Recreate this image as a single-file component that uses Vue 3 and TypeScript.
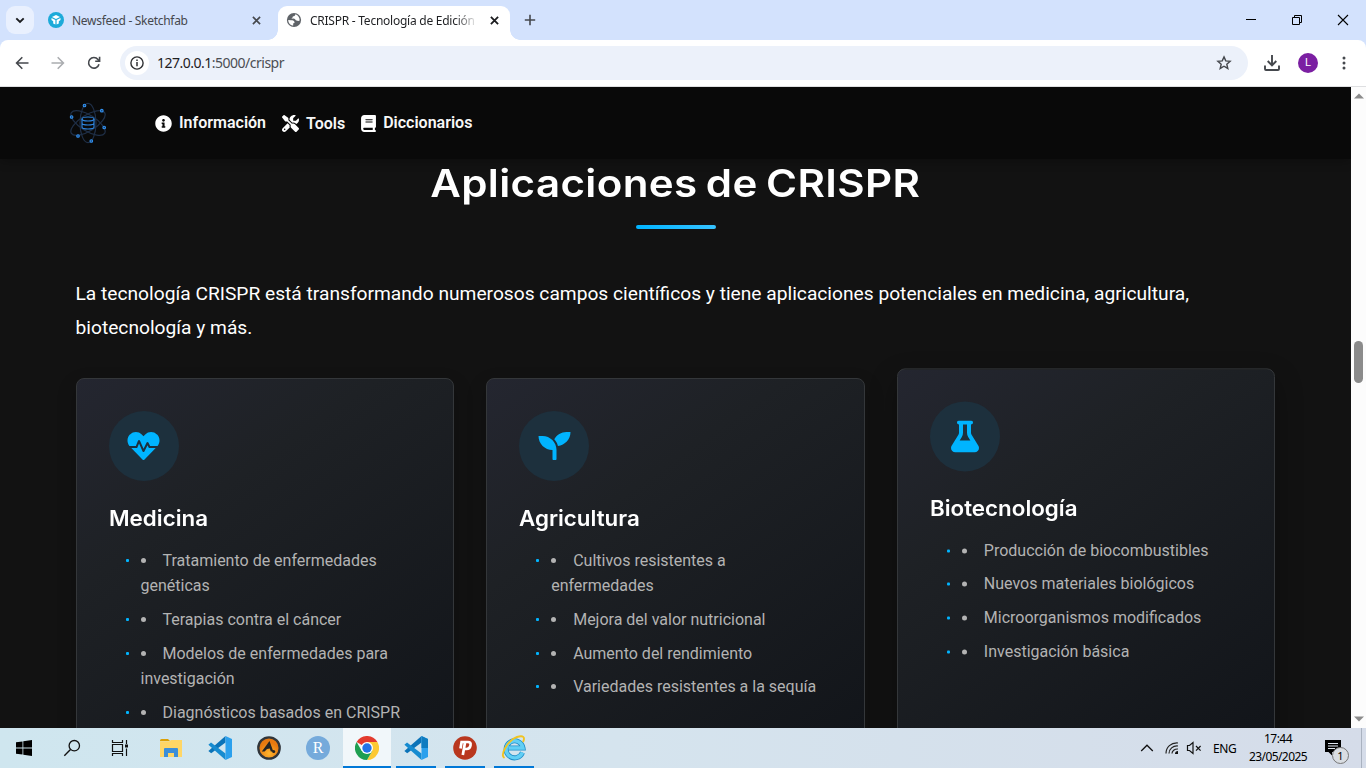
<script setup lang="ts">
interface NavLink { label: string; viewBox: string; width: number; path: string; shift?: boolean }
interface Application { title: string; raised: boolean; viewBox: string; iconWidth: number; path: string; items: string[] }

const links: NavLink[] = [
  { label: 'Información', viewBox: '0 0 512 512', width: 17, path: 'M256 8C119.043 8 8 119.083 8 256c0 136.997 111.043 248 248 248s248-111.003 248-248C504 119.083 392.957 8 256 8zm0 110c23.196 0 42 18.804 42 42s-18.804 42-42 42-42-18.804-42-42 18.804-42 42-42zm56 254c0 6.627-5.373 12-12 12h-88c-6.627 0-12-5.373-12-12v-24c0-6.627 5.373-12 12-12h12v-64h-12c-6.627 0-12-5.373-12-12v-24c0-6.627 5.373-12 12-12h64c6.627 0 12 5.373 12 12v100h12c6.627 0 12 5.373 12 12v24z' },
  { label: 'Tools', viewBox: '0 0 512 512', width: 17, shift: true, path: 'M78.6 5C69.1-2.4 55.6-1.5 47 7L7 47c-8.5 8.5-9.4 22-2.1 31.6l80 104c4.5 5.9 11.6 9.4 19 9.4h54.1l109 109c-14.7 29-10 65.4 14.3 89.600l112 112c12.5 12.5 32.8 12.5 45.3 0l64-64c12.5-12.5 12.5-32.8 0-45.300l-112-112c-24.200-24.200-60.600-29-89.600-14.300l-109-109V104c0-7.500-3.500-14.500-9.400-19L78.600 5zM19.900 396.100C7.200 408.800 0 426.100 0 444.100C0 481.600 30.400 512 67.900 512c18 0 35.300-7.200 48-19.900L233.700 374.300c-7.800-20.900-9-43.600-3.600-65.100l-61.700-61.700L19.900 396.100zM512 144c0-10.500-1.100-20.700-3.200-30.500c-2.400-11.200-16.100-14.100-24.200-6l-63.900 63.900c-3 3-7.100 4.700-11.300 4.700H352c-8.800 0-16-7.200-16-16V102.600c0-4.200 1.700-8.300 4.700-11.300l63.900-63.900c8.100-8.100 5.200-21.800-6-24.200C388.700 1.100 378.500 0 368 0C288.500 0 224 64.500 224 144l0 .8 85.300 85.300c36-9.100 75.800 .5 104 28.700L429 274.500c49-23 83-72.800 83-130.500zM56 432a24 24 0 1 1 48 0 24 24 0 1 1 -48 0z' },
  { label: 'Diccionarios', viewBox: '0 0 448 512', width: 15, path: 'M96 0C43 0 0 43 0 96V416c0 53 43 96 96 96H384h32c17.7 0 32-14.3 32-32s-14.3-32-32-32V384c17.7 0 32-14.3 32-32V32c0-17.7-14.3-32-32-32H384 96zm0 384H352v64H96c-17.700 0-32-14.300-32-32s14.300-32 32-32zm32-240c0-8.800 7.200-16 16-16H336c8.800 0 16 7.200 16 16s-7.200 16-16 16H144c-8.800 0-16-7.200-16-16zm16 48H336c8.800 0 16 7.200 16 16s-7.200 16-16 16H144c-8.800 0-16-7.200-16-16s7.200-16 16-16z' },
]

const applications: Application[] = [
  {
    title: 'Medicina', raised: false, viewBox: '0 0 512 512', iconWidth: 33,
    path: 'M320.2 243.8l-49.7 99.4c-6 12.1-23.4 11.7-28.9-.6l-56.9-126.3-30 71.7H60.6l182.5 186.5c7.1 7.3 18.6 7.3 25.7 0L451.4 288H342.3l-22.1-44.2zM473.7 73.9l-2.4-2.5c-51.5-52.6-135.8-52.6-187.4 0L256 100l-27.9-28.5c-51.5-52.7-135.9-52.7-187.4 0l-2.4 2.4C-10.4 123.7-12.5 203 31 256h102.4l35.9-86.2c5.4-12.9 23.6-13.1 29.3-.4l58.2 129.3 49-97.9c5.9-11.8 22.7-11.8 28.6 0l27.6 55.2H481c43.5-53 41.4-132.3-7.3-182.1z',
    items: ['Tratamiento de enfermedades genéticas', 'Terapias contra el cáncer', 'Modelos de enfermedades para investigación', 'Diagnósticos basados en CRISPR'],
  },
  {
    title: 'Agricultura', raised: false, viewBox: '0 0 512 512', iconWidth: 33,
    path: 'M64 96H0c0 123.7 100.3 224 224 224v144c0 8.8 7.2 16 16 16h32c8.8 0 16-7.2 16-16V320C288 196.3 187.7 96 64 96zm384-64c-84.2 0-157.4 46.5-195.7 115.2 27.7 30.2 48.2 66.9 59 107.6C424 243.1 512 147.9 512 32h-64z',
    items: ['Cultivos resistentes a enfermedades', 'Mejora del valor nutricional', 'Aumento del rendimiento', 'Variedades resistentes a la sequía'],
  },
  {
    title: 'Biotecnología', raised: true, viewBox: '0 0 448 512', iconWidth: 28,
    path: 'M288 0H160 128C110.3 0 96 14.3 96 32s14.3 32 32 32V196.8c0 11.8-3.3 23.5-9.500 33.500L10.300 406.200C3.600 417.200 0 429.700 0 442.600C0 480.900 31.100 512 69.400 512H378.600c38.300 0 69.400-31.100 69.400-69.400c0-12.800-3.600-25.400-10.300-36.400L329.500 230.400c-6.200-10.100-9.500-21.700-9.500-33.500V64c17.700 0 32-14.300 32-32s-14.300-32-32-32H288zM192 196.800V64h64V196.800c0 23.700 6.600 46.900 19 67.100L309.500 320h-171L173 263.900c12.400-20.200 19-43.400 19-67.100z',
    items: ['Producción de biocombustibles', 'Nuevos materiales biológicos', 'Microorganismos modificados', 'Investigación básica'],
  },
]
</script>

<template>
  <div class="screen">
    <header class="tabstrip">
      <div class="tab-search">
        <svg width="10" height="7" viewBox="0 0 10 7"><path d="M1.3 1.3 5 5l3.7-3.7" fill="none" stroke="#1b1c1f" stroke-width="1.9" /></svg>
      </div>
      <div class="tab idle">
        <svg class="favicon" width="16" height="16" viewBox="0 0 16 16">
          <circle cx="8" cy="8" r="8" fill="#1caad9" />
          <path d="M8 3.1 12 5 8 7 4 5z M3.5 6.1 7.4 8v4.6L5.2 11.6V9.2L3.5 8.1z M12.5 6.1 8.6 8v4.6l2.2-1V9.2l1.7-1.1z" fill="#fff" />
        </svg>
        <span class="tab-title newsfeed">Newsfeed - Sketchfab</span>
        <svg class="close" width="9" height="9" viewBox="0 0 9 9"><path d="M.9.9l7.2 7.2M8.1.9.9 8.1" stroke="#45484d" stroke-width="1.6" /></svg>
      </div>
      <div class="tab active">
        <svg class="favicon" width="16" height="16" viewBox="0 0 16 16">
          <circle cx="8" cy="8" r="7.1" fill="#5f6368" />
          <path d="M2.200 8 5 8.200c1.600.1 2.900.3 3.400 1.500.5 1.100-.3 1.400-1.200 1.600v2.300C4.200 13.400 2.300 11 2.200 8zM9.300 2.300c-.1 1.700-1.200 2.100-2.500 2.200.1 1.200-.7 1.600-1.500 1.800.6.8 3.200-.2 4 1.300.5 1.200 1.700 1.300 3 1.400l1.400-.6C13.600 5.300 12 3 9.300 2.300z" fill="#fff" />
        </svg>
        <span class="tab-title crispr">CRISPR - Tecnología de Edición</span>
        <svg class="close" width="9" height="9" viewBox="0 0 9 9"><path d="M.9.9l7.2 7.2M8.1.9.9 8.1" stroke="#1b1c1f" stroke-width="1.8" /></svg>
      </div>
      <svg class="new-tab" width="12" height="12" viewBox="0 0 12 12"><path d="M6 .8v10.400M.8 6h10.400" stroke="#45484d" stroke-width="1.6" /></svg>
      <div class="window-buttons">
        <svg width="12" height="12" viewBox="0 0 12 12"><path d="M1 5.500h10" stroke="#000" /></svg>
        <svg width="12" height="12" viewBox="0 0 12 12"><path d="M1.500 3.500h7v7h-7zM3.500 3.500v-2h7v7h-2" fill="none" stroke="#000" /></svg>
        <svg width="12" height="12" viewBox="0 0 12 12"><path d="M1 1l10 10M11 1 1 11" stroke="#000" stroke-width="1.100" /></svg>
      </div>
    </header>

    <div class="toolbar">
      <svg class="back" width="14" height="14" viewBox="0 0 14 14"><path d="M13.500 7H2M7.300 1.300 1.600 7l5.700 5.700" fill="none" stroke="#45484d" stroke-width="1.600" /></svg>
      <svg class="forward" width="14" height="14" viewBox="0 0 14 14"><path d="M.5 7H12M6.700 1.300 12.400 7l-5.700 5.700" fill="none" stroke="#abadb0" stroke-width="1.600" /></svg>
      <svg class="reload" width="14" height="14" viewBox="0 0 14 14"><path d="M12 8.200A5.300 5.300 0 1 1 11 3.500L12.400 5M12.600.8v4.500H8.200" fill="none" stroke="#45484d" stroke-width="1.600" /></svg>
      <div class="omnibox">
        <span class="site-info">
          <svg width="14" height="14" viewBox="0 0 14 14"><circle cx="7" cy="7" r="6.100" fill="none" stroke="#303134" stroke-width="1.400" /><path d="M7 6.100v4.200M7 3.500v1.500" stroke="#303134" stroke-width="1.500" /></svg>
        </span>
        <span class="url"><b>127.0.0.1</b>:5000/crispr</span>
        <svg class="star" width="16" height="16" viewBox="0 0 16 16"><path d="M8 1.900l1.750 4 4.350.4-3.300 2.900 1 4.250L8 11.200l-3.800 2.250 1-4.250-3.300-2.900 4.350-.4z" fill="none" stroke="#45484d" stroke-width="1.400" /></svg>
      </div>
      <svg class="download" width="16" height="16" viewBox="0 0 16 16"><path d="M8 0v10M3.700 6l4.300 4.300L12.300 6M1 10.500V14q0 1 1 1h12q1 0 1-1v-3.500" fill="none" stroke="#45484d" stroke-width="1.900" /></svg>
      <span class="avatar">L</span>
      <svg class="kebab" width="4" height="14" viewBox="0 0 4 14"><g fill="#45484d"><circle cx="2" cy="2" r="1.500" /><circle cx="2" cy="7" r="1.500" /><circle cx="2" cy="12" r="1.500" /></g></svg>
    </div>

    <div class="viewport">
      <main class="page">
        <nav class="navbar">
          <svg class="logo" width="38" height="42" viewBox="0 0 38 42">
            <g fill="none" stroke="#1f2f47" stroke-width="1.200">
              <ellipse cx="19" cy="21" rx="8" ry="19.600" />
              <ellipse cx="19" cy="21" rx="8" ry="19.600" transform="rotate(58 19 21)" />
              <ellipse cx="19" cy="21" rx="8" ry="19.600" transform="rotate(-58 19 21)" />
            </g>
            <g fill="none" stroke="#2f86e0" stroke-width="1.150">
              <ellipse cx="19" cy="17" rx="6" ry="2" />
              <path d="M13 17v8c0 2.700 12 2.700 12 0v-8M13 21c0 2.700 12 2.700 12 0" />
            </g>
            <g fill="#173c66" stroke="#3291f0" stroke-width="1.100">
              <circle cx="15.500" cy="3.500" r="1.300" /><circle cx="32.800" cy="8.700" r="1.300" /><circle cx="2.600" cy="15" r="1.300" />
              <circle cx="35.200" cy="25.500" r="1.300" /><circle cx="9" cy="34" r="1.300" /><circle cx="22.300" cy="39" r="1.300" />
            </g>
          </svg>
          <a v-for="link in links" :key="link.label" class="nav-link" :class="{ shift: link.shift }">
            <svg :width="link.width" height="17" :viewBox="link.viewBox"><path :d="link.path" fill="#fff" /></svg>
            <span>{{ link.label }}</span>
          </a>
        </nav>

        <section class="content">
          <h2><span>Aplicaciones de CRISPR</span></h2>
          <div class="rule"></div>
          <p class="lead">La tecnología CRISPR está transformando numerosos campos científicos y tiene aplicaciones potenciales en medicina, agricultura, biotecnología y más.</p>
          <div class="cards">
            <article v-for="app in applications" :key="app.title" class="card" :class="{ raised: app.raised }">
              <div class="card-icon">
                <svg :width="app.iconWidth" height="32" :viewBox="app.viewBox"><path :d="app.path" fill="#00b4ff" /></svg>
              </div>
              <h3>{{ app.title }}</h3>
              <ul>
                <li v-for="item in app.items" :key="item"><i class="tick"></i><i class="dot"></i>{{ item }}</li>
              </ul>
            </article>
          </div>
        </section>
      </main>
      <div class="scrollbar">
        <svg width="10" height="6" viewBox="0 0 10 6"><path d="M0 5.500 5 .5l5 5z" fill="#8b8b8b" /></svg>
        <div class="thumb"></div>
        <svg width="10" height="6" viewBox="0 0 10 6"><path d="M0 .5l5 5 5-5z" fill="#8b8b8b" /></svg>
      </div>
    </div>

    <footer class="taskbar">
      <div class="system-buttons">
        <div class="task"><svg width="16" height="16" viewBox="0 0 16 16"><path d="M0 2.300 6.500 1.400v6.200H0zM7.300 1.200 16 0v7.600H7.300zM0 8.400h6.500v6.200L0 13.700zM7.300 8.400H16V16l-8.700-1.200z" fill="#000" /></svg></div>
        <div class="task"><svg width="18" height="18" viewBox="0 0 18 18"><circle cx="11.300" cy="6.700" r="5.200" fill="none" stroke="#111" stroke-width="1.300" /><path d="M7.500 10.500 1.300 16.700" stroke="#111" stroke-width="1.400" /></svg></div>
        <div class="task"><svg width="18" height="16" viewBox="0 0 18 16"><path d="M1.500 4.500h10v7h-10zM1.500 0v2.500h10V0M1.500 16v-2.500h10V16M15.500 0v4M15.500 8.500V16" fill="none" stroke="#111" stroke-width="1.200" /><path d="M14 4.500h3v3h-3z" fill="#111" /></svg></div>
      </div>
      <div class="apps">
        <div class="task">
          <svg width="22" height="20" viewBox="0 0 22 20"><path d="M0 2.500Q0 1 1.500 1H8l2 2H0z" fill="#dca006" /><path d="M0 3.200h9.500L11 2h11v17H0z" fill="#ffd666" /><path d="M4 19v-8q0-1 1-1h12q1 0 1 1v8h-4v-4H8v4z" fill="#3c8ed8" /></svg>
        </div>
        <div class="task">
          <svg width="24" height="24" viewBox="0 0 24 24"><path d="M17.500 0v6.500L3.200 17.300.4 15z" fill="#0b73b8" /><path d="M.4 8.800 3 6.600l14.500 11V24z" fill="#168bd0" /><path d="M17.500 0 24 3v18l-6.500 3z" fill="#2ba0ed" /></svg>
        </div>
        <div class="task">
          <svg width="24" height="24" viewBox="0 0 24 24"><defs><radialGradient id="flame" cy=".75"><stop offset="0" stop-color="#ffb52d" /><stop offset="1" stop-color="#e77910" /></radialGradient></defs><circle cx="12" cy="12" r="10.700" fill="url(#flame)" stroke="#30353a" stroke-width="2.300" /><path d="M4.800 15.500 12.500 5l3.800 10.500h-2.500l-1-3-2.800.5-2.400 2.500z" fill="#242424" /><circle cx="16.700" cy="15.500" r="1.500" fill="#222" /></svg>
        </div>
        <div class="task"><span class="r-logo">R</span></div>
        <div class="task current">
          <svg width="24" height="24" viewBox="0 0 24 24"><path d="M12 12 1.600 6A12 12 0 0 1 22.400 6z" fill="#e33b2e" /><path d="M12 6h10.400A12 12 0 0 1 12 24l5.200-9z" fill="#fcc934" /><path d="M1.600 6A12 12 0 0 0 12 24l5.200-9L12 12 6.800 15z" fill="#1e9f51" /><circle cx="12" cy="12" r="6" fill="#fff" /><circle cx="12" cy="12" r="4.700" fill="#2374e8" /></svg>
        </div>
        <div class="task open">
          <svg width="24" height="24" viewBox="0 0 24 24"><path d="M17.500 0v6.500L3.200 17.300.4 15z" fill="#0b73b8" /><path d="M.4 8.800 3 6.600l14.500 11V24z" fill="#168bd0" /><path d="M17.500 0 24 3v18l-6.500 3z" fill="#2ba0ed" /><path d="M17.500 0 24 3v9h-6.500z" fill="#0f7cc0" /></svg>
        </div>
        <div class="task open">
          <svg width="24" height="24" viewBox="0 0 24 24"><circle cx="12" cy="12" r="11.800" fill="#b9371e" /><path d="M7.500 12.500 8.600 6h6.400q3.200 0 2.500 3.500t-4 3.500h-2.300M12 6.500 9.800 19" fill="none" stroke="#fff" stroke-width="2.700" /></svg>
        </div>
        <div class="task open">
          <svg width="26" height="26" viewBox="0 0 26 26"><path d="M21.500 17.500A8.500 8.500 0 1 1 22 13H7.500" fill="none" stroke="#218dc7" stroke-width="5" /><path d="M21.500 17.500A8.500 8.500 0 1 1 22 13H7.500" fill="none" stroke="#62cff5" stroke-width="3.400" /><path d="M3.500 23C-1.500 20 7 5 16 2c6-2 8.500 0 6 5" fill="none" stroke="#f1c421" stroke-width="1.900" /></svg>
        </div>
      </div>
      <div class="tray">
        <svg class="chevron" width="14" height="8" viewBox="0 0 14 8"><path d="M1.200 7 7 1.200 12.800 7" fill="none" stroke="#111" stroke-width="1.300" /></svg>
        <svg class="wifi" width="14" height="14" viewBox="0 0 14 14"><path d="M1 12.500C1 6 6 1.500 13 2M4 12.500C4 8 8 4.500 13 5M7 12.500C7 10 9.500 7.800 13 8" fill="none" stroke="#222" stroke-width="1.200" /><path d="M10 13q0-3 3-3v3z" fill="#111" /></svg>
        <svg class="mute" width="16" height="14" viewBox="0 0 16 14"><path d="M1.500 4.500h2L7 1.500v11l-3.500-3h-2z" fill="none" stroke="#111" stroke-width="1.200" /><path d="M10 5l4.600 4.600M14.600 5 10 9.600" stroke="#111" stroke-width="1.200" /></svg>
        <span class="lang">ENG</span>
        <div class="clock"><span>17:44</span><span class="date">23/05/2025</span></div>
        <div class="notice">
          <svg width="16" height="16" viewBox="0 0 16 16"><path d="M0 0h16v12H7v3.500L3.500 12H0z" fill="#000" /><path d="M3 3.500h10M3 6h10M3 8.500h7" stroke="#dfe5ee" stroke-width="1" /></svg>
          <span class="badge">1</span>
        </div>
        <div class="peek"></div>
      </div>
    </footer>
  </div>
</template>

<style>
html, body { margin: 0; overflow: hidden; }
</style>

<style scoped>
* { box-sizing: border-box; }
svg { display: block; flex: none; }
.screen { width: 1366px; height: 768px; display: flex; flex-direction: column; overflow: hidden; font-family: 'Noto Sans', 'Open Sans', sans-serif; background: #d3e2fd; }

.tabstrip { height: 40px; flex: none; display: flex; align-items: center; padding-left: 6px; background: #d3e2fd; }
.tab-search { width: 28px; height: 28px; border-radius: 9px; background: #e9f0fe; display: grid; place-items: center; }
.tab { display: flex; align-items: center; }
.tab.idle { width: 230px; margin-left: 14px; }
.tab.active { position: relative; width: 232px; height: 34px; align-self: flex-end; margin-left: 0; padding: 0 0 6px 8px; background: #fff; border-radius: 9px 9px 0 0; }
.tab.active::before, .tab.active::after { content: ''; position: absolute; bottom: 0; width: 10px; height: 10px; }
.tab.active::before { right: 100%; background: radial-gradient(circle at 0 0, transparent 9.5px, #fff 10px); }
.tab.active::after { left: 100%; background: radial-gradient(circle at 100% 0, transparent 9.5px, #fff 10px); }
.tab-title { margin-left: 8px; padding-top: 2px; white-space: nowrap; overflow: hidden; font-size: 12px; line-height: 18px; color: #45484d; }
.newsfeed { width: 179px; letter-spacing: -0.29px; }
.crispr { width: 166px; color: #1f2023; letter-spacing: -0.25px; -webkit-mask-image: linear-gradient(90deg, #000 145px, transparent 168px); mask-image: linear-gradient(90deg, #000 145px, transparent 168px); }
.tab.idle .close { margin-left: 1px; }
.tab.active .close { margin-left: 14px; }
.new-tab { margin-left: 14px; }
.window-buttons { margin-left: auto; display: flex; gap: 34px; padding-right: 17px; }

.toolbar { height: 47px; flex: none; display: flex; align-items: center; padding-left: 15px; background: #fff; border-bottom: 1px solid #dedfe1; border-radius: 8px 8px 0 0; }
.forward { margin-left: 22px; }
.reload { margin-left: 22px; }
.omnibox { display: flex; align-items: center; width: 1128px; height: 34px; margin-left: 19px; padding: 0 16px 0 5px; border-radius: 17px; background: #ecf1fa; }
.site-info { width: 24px; height: 24px; border-radius: 50%; background: #fff; display: grid; place-items: center; }
.url { margin-left: 8px; padding-bottom: 1px; font-size: 14px; letter-spacing: -0.5px; color: #4b4e53; }
.url b { font-weight: 400; color: #1f2023; }
.star { margin-left: auto; }
.download { margin-left: 16px; }
.avatar { width: 20px; height: 20px; margin-left: 18px; border-radius: 50%; background: #7b1fa2; color: #fff; font: 11px/20px Roboto, sans-serif; text-align: center; }
.kebab { margin-left: 24px; }

.viewport { height: 641px; flex: none; display: flex; }
.page { width: 1351px; height: 641px; overflow: hidden; background: #121212; color: #fff; font-family: Roboto, sans-serif; }
.navbar { height: 72px; display: flex; align-items: center; padding-left: 69px; background: #090909; box-shadow: 0 2px 10px rgba(0, 0, 0, .3); position: relative; }
.logo { margin-right: 48px; }
.nav-link { display: flex; align-items: center; gap: 7px; margin-right: 16px; font-size: 16px; font-weight: 600; line-height: 24px; color: #f7f7f7; }
.nav-link.shift span { position: relative; top: 1px; }
.content { width: 1200px; margin: 0 auto; }
h2 { margin: 0; height: 66px; text-align: center; font: 600 38.5px/48px Inter, sans-serif; letter-spacing: .35px; word-spacing: -2.5px; }
h2 span { display: inline-block; transform: scaleX(1.093); }
.rule { width: 80px; height: 4px; margin: 0 auto; border-radius: 2px; background: linear-gradient(90deg, #00b4ff, #36c2ff); }
.lead { margin: 47.8px 0 0; font-size: 19.2px; line-height: 34.3px; }
.cards { display: grid; grid-template-columns: repeat(3, 1fr); gap: 32px; margin-top: 32.6px; }
.card { height: 395px; padding: 32px; border: 1px solid #34373a; border-radius: 8px; background: linear-gradient(145deg, #242630 0%, #1e2125 32%, #111419 100%); box-shadow: 0 8px 20px rgba(0, 0, 0, .2); }
.card.raised { transform: translateY(-9.6px); box-shadow: 0 12px 28px rgba(0, 0, 0, .32); }
.card-icon { width: 70px; height: 70px; border-radius: 50%; background: #1d303d; display: grid; place-items: center; }
h3 { margin: 24px 0 0; font: 600 21.6px/27px Inter, sans-serif; transform: scaleX(1.035); transform-origin: 0 50%; }
ul { list-style: none; margin: 15.85px 0 0; padding: 0 4px 0 32px; }
li { position: relative; margin-bottom: 8px; font-size: 16px; line-height: 25.6px; color: #b3b3b3; }
.tick { position: absolute; left: -15px; top: 11px; width: 3px; height: 3px; border-radius: 1px; background: #00b4ff; }
.dot { display: inline-block; width: 5px; height: 5px; margin: 0 17px 3px 0; border-radius: 50%; background: #b3b3b3; vertical-align: baseline; }
.scrollbar { width: 15px; display: flex; flex-direction: column; align-items: center; padding: 6px 0; background: #fcfcfc; }
.thumb { width: 9px; height: 42px; margin: 242px 0 auto; border-radius: 5px; background: #8b8b8b; }

.taskbar { height: 40px; flex: none; display: flex; background: linear-gradient(90deg, #cfe6ef, #d5e4ee 45%, #d5dce9); }
.system-buttons { display: flex; width: 147px; }
.apps { display: flex; gap: 1px; }
.task { position: relative; width: 48px; height: 40px; display: grid; place-items: center; }
.current { background: #f1f7fa; border-bottom: 2px solid #0078d7; padding-top: 2px; }
.open::after { content: ''; position: absolute; left: 4px; right: 4px; bottom: 0; height: 2px; background: #0078d7; }
.r-logo { width: 24px; height: 24px; border-radius: 50%; background: #75aadb; color: #fff; font: 16px/24px 'Liberation Serif', serif; text-align: center; }
.tray { margin-left: auto; display: flex; align-items: center; color: #000; font-size: 12px; }
.wifi { margin-left: 11px; }
.mute { margin-left: 7px; }
.lang { margin-left: 11px; width: 24px; font-size: 12px; letter-spacing: -0.45px; }
.clock { width: 60px; margin-left: 11px; display: flex; flex-direction: column; align-items: center; line-height: 18px; letter-spacing: -0.55px; white-space: nowrap; }
.clock .date { letter-spacing: -0.6px; }
.notice { position: relative; width: 16px; height: 16px; margin-left: 17px; }
.badge { position: absolute; left: 7px; top: 7px; width: 17px; height: 17px; border: 1px solid #777; border-radius: 50%; background: #d9dde2; font-size: 11px; line-height: 15px; text-align: center; }
.peek { width: 1px; height: 40px; margin: 0 4px 0 20px; background: #a9b2c0; }
</style>
